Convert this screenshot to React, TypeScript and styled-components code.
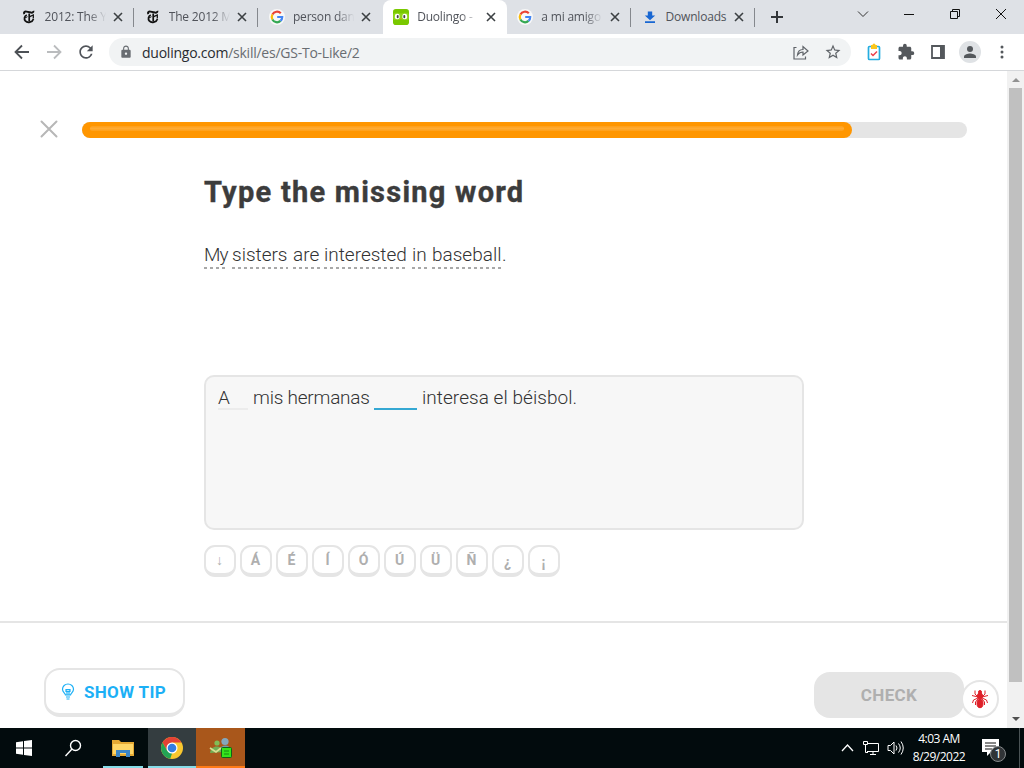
import styled, { createGlobalStyle } from 'styled-components';
import { MdExtension, MdLock, MdRefresh, MdStarBorder } from 'react-icons/md';

const GlobalStyle = createGlobalStyle`
  * {
    box-sizing: border-box;
  }
  body {
    margin: 0;
    overflow: hidden;
    background: #fff;
  }
  svg {
    display: block;
    flex: none;
  }
`;

const StyledScreen = styled.div`
  width: 1024px;
  height: 768px;
  display: flex;
  flex-direction: column;
  font-family: Roboto, 'Liberation Sans', sans-serif;
  color: #4b4b4b;
`;

/* browser tabs */
const StyledTabStrip = styled.div`
  height: 34px;
  flex: none;
  display: flex;
  align-items: stretch;
  padding-left: 10px;
  background: #dee1e6;
  font-family: 'Open Sans', 'Noto Sans', sans-serif;
`;
const StyledTab = styled.div<{ $active?: boolean; $line?: boolean }>`
  position: relative;
  width: 124.2px;
  flex: none;
  display: flex;
  align-items: center;
  padding-left: 10.6px;
  border-radius: 8px 8px 0 0;
  background: ${(props) => (props.$active ? '#fff' : 'transparent')};
  &::after {
    content: '';
    position: absolute;
    right: 0;
    top: 8px;
    width: 1px;
    height: 19px;
    background: ${(props) => (props.$line ? '#85888d' : 'transparent')};
  }
`;
const StyledTabTitle = styled.span<{ $full?: boolean }>`
  width: 62px;
  margin-left: 8px;
  white-space: nowrap;
  font-size: 12px;
  line-height: 18px;
  letter-spacing: -0.2px;
  color: #50535a;
  mask-image: ${(props) =>
    props.$full ? 'none' : 'linear-gradient(90deg, #000 70%, transparent 99%)'};
`;
const StyledTabClose = styled.span`
  width: 16px;
  margin-left: 3.4px;
  display: flex;
  justify-content: center;
`;
const StyledNewTab = styled.div`
  display: flex;
  align-items: center;
  margin-left: 15px;
`;
const StyledWindowButtons = styled.div`
  display: flex;
  align-items: flex-start;
  gap: 30px;
  margin-left: auto;
  padding: 6px 15px 0 0;
`;

/* address bar */
const StyledToolbar = styled.div`
  height: 37px;
  flex: none;
  display: flex;
  align-items: center;
  padding: 0 15px 0 13px;
  border-bottom: 1px solid #d5d7da;
  color: #50545a;
`;
const StyledNavButtons = styled.div`
  display: flex;
  align-items: center;
  gap: 14px;
  svg:last-child {
    margin-left: -1px;
  }
`;
const StyledAddress = styled.div`
  width: 744px;
  height: 28px;
  margin-left: 13px;
  padding: 0 9px 0 10px;
  display: flex;
  align-items: center;
  border-radius: 14px;
  background: #f1f3f4;
  font-family: 'Open Sans', 'Noto Sans', sans-serif;
  font-size: 14px;
  letter-spacing: -0.24px;
  color: #696d72;
  b {
    font-weight: 400;
    color: #292c30;
  }
`;
const StyledUrl = styled.span`
  flex: 1;
  margin-left: 9px;
`;
const StyledAddressIcons = styled.div`
  display: flex;
  align-items: center;
  gap: 14px;
  color: #5f6368;
`;
const StyledExtensions = styled.div`
  display: flex;
  align-items: center;
  gap: 14px;
  margin-left: 14px;
  color: #54585c;
`;
const StyledProfile = styled.div`
  display: flex;
  align-items: center;
  gap: 14px;
  margin-left: -2px;
`;

/* page */
const StyledViewport = styled.div`
  flex: 1;
  min-height: 0;
  display: flex;
`;
const StyledPage = styled.main`
  width: 1007px;
  display: flex;
  flex-direction: column;
`;
const StyledScrollbar = styled.div`
  width: 17px;
  display: flex;
  flex-direction: column;
  align-items: center;
  padding: 7px 0 7px;
  background: #f1f1f1;
`;
const StyledThumb = styled.div`
  width: 13px;
  height: 594px;
  margin: 6px 0 auto;
  background: #c0c0c0;
`;
const StyledProgressRow = styled.div`
  display: flex;
  align-items: center;
  gap: 24px;
  padding: 51px 40px 1px;
  svg {
    margin: -3px 0 -1px;
  }
`;
const StyledTrack = styled.div`
  flex: 1;
  height: 16px;
  border-radius: 8px;
  background: #e5e5e5;
`;
const StyledFill = styled.div`
  width: 87%;
  height: 16px;
  padding: 4px 8px;
  border-radius: 8px;
  background: #ff9600;
  &::before {
    content: '';
    display: block;
    height: 5px;
    border-radius: 3px;
    background: linear-gradient(#ff9f17, #ffab33 50%, #ff9f17);
  }
`;
const StyledChallenge = styled.section`
  width: 600px;
  height: 482px;
  margin-left: 204px;
  display: flex;
  flex-direction: column;
`;
const StyledHeading = styled.h1`
  margin: 35px 0 0;
  font-size: 29px;
  line-height: 36px;
  font-weight: 700;
  letter-spacing: 1.25px;
  white-space: nowrap;
  color: #3c3c3c;
  -webkit-text-stroke: 0.4px #3c3c3c;
`;
const StyledSentence = styled.div`
  height: 26px;
  margin-top: 33px;
  display: flex;
  font-size: 19px;
  line-height: 24px;
  font-weight: 300;
  color: #333;
`;
const StyledHint = styled.span<{ $width: number; $space: number; $spacing?: number }>`
  width: ${(props) => props.$width}px;
  margin-right: ${(props) => props.$space}px;
  white-space: nowrap;
  letter-spacing: ${(props) => props.$spacing || 0}px;
  background: repeating-linear-gradient(90deg, #a8a8a8 0 3px, transparent 3px 6px) 0 100% / 100% 2px
    no-repeat;
`;
const StyledAnswer = styled.div`
  height: 155px;
  margin-top: 106px;
  padding: 9px 12px;
  display: flex;
  align-items: flex-start;
  border: 2px solid #e5e5e5;
  border-radius: 10px;
  background: #f7f7f7;
  font-size: 19px;
  line-height: 24px;
  font-weight: 300;
  color: #333;
  white-space: nowrap;
`;
const StyledBlank = styled.span<{ $width: number; $color: string }>`
  width: ${(props) => props.$width}px;
  height: 24px;
  margin-right: 5px;
  border-bottom: 2px solid ${(props) => props.$color};
`;
const StyledPhrase = styled.span<{ $width: number; $spacing: number }>`
  width: ${(props) => props.$width}px;
  margin-right: 5px;
  letter-spacing: ${(props) => props.$spacing}px;
`;
const StyledKeys = styled.div`
  display: flex;
  gap: 4px;
  margin-top: 15px;
`;
const StyledKey = styled.button<{ $low?: boolean }>`
  width: 32px;
  height: 32px;
  padding: ${(props) => (props.$low ? '3px' : '0')} 1px 0 0;
  border: 2px solid #e5e5e5;
  border-bottom-width: 4px;
  border-radius: 11px;
  background: #fff;
  font-family: Roboto, sans-serif;
  font-size: 14px;
  line-height: 20px;
  font-weight: 700;
  color: #afafaf;
`;
const StyledFooter = styled.footer`
  flex: 1;
  display: flex;
  justify-content: space-between;
  align-items: flex-start;
  padding: 45px 43px 0 44px;
  border-top: 2px solid #e5e5e5;
`;
const StyledButton = styled.button`
  display: flex;
  align-items: center;
  justify-content: center;
  padding: 0;
  border-radius: 16px;
  font-family: Roboto, sans-serif;
  font-size: 17px;
  font-weight: 700;
  letter-spacing: 0.35px;
`;
const StyledTipButton = styled(StyledButton)`
  width: 141px;
  height: 49px;
  gap: 9px;
  padding-right: 2px;
  border: 2px solid #e5e5e5;
  border-bottom-width: 4px;
  background: #fff;
  color: #1cb0f6;
`;
const StyledCheckButton = styled(StyledButton)`
  position: relative;
  width: 150px;
  height: 46px;
  margin-top: 4px;
  border: 0;
  background: #e5e5e5;
  color: #afafaf;
`;
const StyledBugBadge = styled.span`
  position: absolute;
  left: 147px;
  top: 8px;
  width: 38px;
  height: 38px;
  display: flex;
  align-items: center;
  justify-content: center;
  border: 2px solid #e5e5e5;
  border-radius: 50%;
  background: #fff;
`;

/* taskbar */
const StyledTaskbar = styled.div`
  height: 40px;
  flex: none;
  display: flex;
  background: #020b0d;
  color: #fff;
`;
const StyledTask = styled.div<{ $width: number; $bg?: string; $line?: string; $inset?: number }>`
  width: ${(props) => props.$width}px;
  display: flex;
  align-items: center;
  justify-content: center;
  background: linear-gradient(${(props) => props.$line || 'transparent'} 0 0) center bottom /
      calc(100% - ${(props) => props.$inset || 0}px) 2px no-repeat
    ${(props) => props.$bg || 'transparent'};
`;
const StyledTray = styled.div`
  margin-left: auto;
  display: flex;
  align-items: center;
  padding-right: 18px;
  border-right: 1px solid #4a5355;
  margin-right: 4px;
`;
const StyledClock = styled.div`
  width: 60px;
  margin: 0 13px 0 5px;
  text-align: center;
  font-family: 'Open Sans', 'Noto Sans', sans-serif;
  font-size: 12px;
  line-height: 18px;
  letter-spacing: -0.5px;
  white-space: nowrap;
`;
const StyledNotice = styled.div`
  position: relative;
  width: 19px;
  margin-top: -1px;
`;
const StyledNoticeCount = styled.span`
  position: absolute;
  left: 8px;
  top: 7px;
  width: 16px;
  height: 16px;
  border: 1px solid #85898b;
  border-radius: 50%;
  background: #303437;
  font-size: 12px;
  line-height: 14px;
  text-align: center;
`;

function TimesIcon() {
  return (
    <svg width="16" height="16" viewBox="0 0 16 16" fill="none" stroke="#111">
      <path d="M3.3 5.2C2.4 3.2 3.8 2.2 5.5 2.6l4.5 1c1.6.3 2.7-.5 2.3-1.7" strokeWidth="2" />
      <path d="M5.8 6C3.2 7 2.8 10 4.3 11.900c2.200 2.500 7 1.600 8.200-2" strokeWidth="1.7" />
      <path d="M3.2 9.300l3.300-1.600" strokeWidth="1" />
      <path d="M8.2 4.500v8" strokeWidth="1.7" />
      <path d="M8.8 7.600l3.500-1.600v3.600" strokeWidth="1.3" />
    </svg>
  );
}

function GoogleIcon() {
  return (
    <svg width="16" height="16" viewBox="0 0 16 16">
      <circle cx="8" cy="8" r="8" fill="#f8f8f8" />
      <g fill="none" strokeWidth="2.2">
        <path d="M3.4 5.5A5.2 5.2 0 0 1 11.8 4.3" stroke="#ea4335" />
        <path d="M3.4 5.5a5.4 5.4 0 0 0 0 5" stroke="#fbbc05" />
        <path d="M3.4 10.5a5.2 5.2 0 0 0 8.1 1.4" stroke="#34a853" />
        <path d="M8.2 8h5a5.2 5.2 0 0 1-1.7 3.9" stroke="#4285f4" />
      </g>
    </svg>
  );
}

function DuoIcon() {
  return (
    <svg width="16" height="16" viewBox="0 0 17 17">
      <rect width="17" height="17" rx="3" fill="#79c800" />
      <path d="M0 5.5c2-2 6-1.500 8.500-.8 2.500-.7 6.500-1.200 8.500.8v5c-2 2-6 1.500-8.500 0-2.500 1.500-6.500 2-8.500 0z" fill="#8fd619" />
      <rect x="2" y="5" width="5" height="6" rx="2.3" fill="#fff" />
      <rect x="10" y="5" width="5" height="6" rx="2.3" fill="#fff" />
      <rect x="4" y="6.5" width="2" height="3.2" rx="1" fill="#444" />
      <rect x="11" y="6.5" width="2" height="3.2" rx="1" fill="#444" />
      <path d="M7.5 9.800h2l-1 1.400z" fill="#ff9d00" />
    </svg>
  );
}

function DownloadIcon() {
  return (
    <svg width="16" height="16" viewBox="0 0 16 16" fill="#1967d2">
      <path d="M5.8 2.500h4.400v4h3L8 11.300 2.800 6.500h3zM3 12.300h10V14H3z" />
    </svg>
  );
}

const tabs = [
  { title: '2012: The Y', icon: <TimesIcon />, line: true },
  { title: 'The 2012 M', icon: <TimesIcon />, line: true },
  { title: 'person dan', icon: <GoogleIcon /> },
  { title: 'Duolingo -', icon: <DuoIcon />, active: true },
  { title: 'a mi amigo', icon: <GoogleIcon />, line: true },
  { title: 'Downloads', icon: <DownloadIcon />, line: true, full: true },
];

const hints = [
  { word: 'My', width: 22, space: 6, spacing: -1 },
  { word: 'sisters', width: 56, space: 5 },
  { word: 'are', width: 27, space: 4 },
  { word: 'interested', width: 83, space: 5 },
  { word: 'in', width: 15, space: 5 },
  { word: 'baseball', width: 70, space: 0 },
];

const keys = ['↓', 'Á', 'É', 'Í', 'Ó', 'Ú', 'Ü', 'Ñ', '¿', '¡'];

function BrowserTabs() {
  return (
    <StyledTabStrip>
      {tabs.map((tab) => (
        <StyledTab key={tab.title} $active={tab.active} $line={tab.line}>
          {tab.icon}
          <StyledTabTitle $full={tab.full}>{tab.title}</StyledTabTitle>
          <StyledTabClose>
            <svg width="10" height="10" viewBox="0 0 10 10" stroke="#3c4043" strokeWidth="1.6">
              <path d="M1 1l8 8M9 1L1 9" />
            </svg>
          </StyledTabClose>
        </StyledTab>
      ))}
      <StyledNewTab>
        <svg width="14" height="14" viewBox="0 0 14 14" stroke="#33363a" strokeWidth="2">
          <path d="M7 1v12M1 7h12" />
        </svg>
      </StyledNewTab>
      <StyledWindowButtons>
        <svg width="16" height="16" viewBox="0 0 16 16" fill="none" stroke="#333">
          <path d="M3 5.500l5 5 5-5" />
        </svg>
        <svg width="16" height="16" viewBox="0 0 16 16" stroke="#111">
          <path d="M3 8.500h10" />
        </svg>
        <svg width="16" height="16" viewBox="0 0 16 16" fill="none" stroke="#111">
          <path d="M3.500 5.500h7v7h-7zM5.500 5.500v-2h7v7h-2" />
        </svg>
        <svg width="16" height="16" viewBox="0 0 16 16" stroke="#111">
          <path d="M3 3l10 10M13 3L3 13" />
        </svg>
      </StyledWindowButtons>
    </StyledTabStrip>
  );
}

function BrowserToolbar() {
  return (
    <StyledToolbar>
      <StyledNavButtons>
        <svg width="18" height="18" viewBox="0 0 18 18" fill="none" stroke="#4d5156" strokeWidth="1.8">
          <path d="M16 9H3M9 2.500L2.500 9 9 15.500" />
        </svg>
        <svg width="18" height="18" viewBox="0 0 18 18" fill="none" stroke="#babcbe" strokeWidth="1.8">
          <path d="M2 9h13M9 2.500L15.500 9 9 15.500" />
        </svg>
        <MdRefresh size={20} />
      </StyledNavButtons>
      <StyledAddress>
        <MdLock size={14} />
        <StyledUrl>
          <b>duolingo.com</b>/skill/es/GS-To-Like/2
        </StyledUrl>
        <StyledAddressIcons>
          <svg width="18" height="18" viewBox="0 0 18 18" fill="none" stroke="currentColor" strokeWidth="1.2">
            <path d="M4.500 4.500H2v11.500h11.500V13.500M5.500 12c.3-3.500 2.500-5.400 5.500-5.500V3.500l5 4.500-5 4v-3c-2.500 0-4 .8-5.500 3z" />
          </svg>
          <MdStarBorder size={18} />
        </StyledAddressIcons>
      </StyledAddress>
      <StyledExtensions>
        <svg width="18" height="18" viewBox="0 0 18 18" fill="none">
          <rect x="3.5" y="3.5" width="11" height="13" rx="1" fill="#fff" stroke="#25ade0" strokeWidth="1.7" />
          <path d="M6 2h1.500a1.500 1.500 0 0 1 3 0H12v4H6z" fill="#fbc61c" />
          <path d="M6 10.500l2 2 4-4" stroke="#ec3f4b" strokeWidth="1.5" />
        </svg>
        <MdExtension size={18} />
        <svg width="18" height="18" viewBox="0 0 18 18" fill="none">
          <path d="M3 3h12v12H3z" stroke="currentColor" strokeWidth="1.8" />
          <path d="M11 3h4v12h-4z" fill="currentColor" />
        </svg>
        <StyledProfile>
          <svg width="22" height="22" viewBox="0 0 22 22" fill="currentColor">
            <circle cx="11" cy="11" r="11" fill="#dfe2e5" />
            <circle cx="11" cy="8" r="3" />
            <path d="M5 17v-1.500c0-2 4-3 6-3s6 1 6 3V17z" />
          </svg>
          <svg width="14" height="16" viewBox="1 0 14 16" fill="currentColor">
            <circle cx="8" cy="3" r="1.5" />
            <circle cx="8" cy="8" r="1.5" />
            <circle cx="8" cy="13" r="1.5" />
          </svg>
        </StyledProfile>
      </StyledExtensions>
    </StyledToolbar>
  );
}

function Lesson() {
  return (
    <StyledPage>
      <StyledProgressRow>
        <svg width="18" height="18" viewBox="0 0 18 18" stroke="#b7b7b7" strokeWidth="2" strokeLinecap="round">
          <path d="M1.500 1.500l15 15M16.500 1.500l-15 15" />
        </svg>
        <StyledTrack>
          <StyledFill />
        </StyledTrack>
      </StyledProgressRow>
      <StyledChallenge>
        <StyledHeading>Type the missing word</StyledHeading>
        <StyledSentence>
          {hints.map((hint) => (
            <StyledHint key={hint.word} $width={hint.width} $space={hint.space} $spacing={hint.spacing}>
              {hint.word}
            </StyledHint>
          ))}
          .
        </StyledSentence>
        <StyledAnswer>
          <StyledBlank $width={30} $color="#ececec">A</StyledBlank>
          <StyledPhrase $width={116} $spacing={-0.22}>mis hermanas</StyledPhrase>
          <StyledBlank $width={43} $color="#35a8d3" />
          <StyledPhrase $width={156} $spacing={0.05}>interesa el béisbol.</StyledPhrase>
        </StyledAnswer>
        <StyledKeys>
          {keys.map((key) => (
            <StyledKey key={key} $low={key === '¿' || key === '¡'}>{key}</StyledKey>
          ))}
        </StyledKeys>
      </StyledChallenge>
      <StyledFooter>
        <StyledTipButton>
          <svg width="14" height="18" viewBox="0 0 14 18" fill="none" stroke="currentColor" strokeWidth="1.2">
            <path d="M4.500 12C4 10 1.500 9 1.500 6.200a5.500 5.200 0 0 1 11 0C12.500 9 10 10 9.500 12zM5 14h4M5.500 16h3M6 12V7.500M8 12V7.500M5 6.500h4v2H5z" />
          </svg>
          SHOW TIP
        </StyledTipButton>
        <StyledCheckButton>
          CHECK
          <StyledBugBadge>
            <svg width="18" height="20" viewBox="0 0 18 20" fill="#df2029" stroke="#df2029">
              <ellipse cx="9" cy="14.5" rx="3" ry="4.2" />
              <ellipse cx="9" cy="7" rx="2.6" ry="3" />
              <circle cx="9" cy="3" r="1.5" />
              <path d="M7 8L4 5V1.500M11 8l3-3V1.500M7 8L1 6.500M11 8l6-1.500M7 9l-4.500 2-1 3M11 9l4.500 2 1 3M7 10l-2.500 3v3M11 10l2.500 3v3" fill="none" />
            </svg>
          </StyledBugBadge>
        </StyledCheckButton>
      </StyledFooter>
    </StyledPage>
  );
}

function Taskbar() {
  return (
    <StyledTaskbar>
      <StyledTask $width={48}>
        <svg width="16" height="16" viewBox="0 0 16 16" fill="#fff">
          <path d="M0 2.300L7 1.200v6.300H0zM8 1l8-1v7.500H8zM0 8.500h7v6.300L0 13.700zM8 8.500h8V16l-8-1z" />
        </svg>
      </StyledTask>
      <StyledTask $width={49}>
        <svg width="18" height="18" viewBox="0 0 18 18" fill="none" stroke="#fff" strokeWidth="1.4">
          <circle cx="11.5" cy="6.5" r="5" />
          <path d="M8 10l-6.500 7" />
        </svg>
      </StyledTask>
      <StyledTask $width={51} $line="#86dce8" $inset={11}>
        <svg width="22" height="18" viewBox="0 0 22 18">
          <path d="M0 1h7l2 2h13v14H0z" fill="#e5a934" />
          <path d="M1 5h20v10H1z" fill="#ffd667" />
          <path d="M4 18v-7h14v7h-4v-4H8v4z" fill="#3d86c6" />
        </svg>
      </StyledTask>
      <StyledTask $width={48} $bg="#343d40" $line="#86dce8">
        <svg width="22" height="22" viewBox="0 0 22 22">
          <circle cx="11" cy="11" r="11" fill="#f9c72f" />
          <path d="M1.500 5.500A11 11 0 0 1 20.500 5.500H11L6.200 13.800z" fill="#e44235" />
          <path d="M1.500 5.500l4.700 8.200L11 16.500l-1.800 5.300A11 11 0 0 1 1.500 5.500z" fill="#23a455" />
          <circle cx="11" cy="11" r="5.5" fill="#fff" />
          <circle cx="11" cy="11" r="4.3" fill="#347de2" />
        </svg>
      </StyledTask>
      <StyledTask $width={49} $bg="#a9571b" $line="#ff7b18">
        <svg width="24" height="22" viewBox="0 0 24 22">
          <circle cx="8" cy="6" r="2.6" fill="#81bd56" />
          <circle cx="16" cy="4.5" r="3.6" fill="#84a7bd" />
          <path d="M1 16c1-8 11-9 13-1z" fill="#71af55" />
          <path d="M10 13c2-6 11-6 12 0z" fill="#6e9ead" />
          <path d="M1 11l6 4 5-4" fill="none" stroke="#d9df93" strokeWidth="1.7" />
          <rect x="12.5" y="10.5" width="10" height="10" rx="1" fill="#35e51b" stroke="#145f17" />
          <path d="M15 14h5M15 17h5" stroke="#168a14" />
        </svg>
      </StyledTask>
      <StyledTray>
        <svg width="13" height="10" viewBox="0 0 13 10" fill="none" stroke="#fff" strokeWidth="1.3">
          <path d="M1 8l5.500-6L12 8" />
        </svg>
        <StyledTask $width={33}>
          <svg width="18" height="16" viewBox="0 0 18 16" fill="none" stroke="#fff">
            <path d="M5 3.500h11.500v8H5M8 14.500h6M11 11.500v3M1.500 1.500h4v3h-4zM3.500 4.500v8H6" />
          </svg>
        </StyledTask>
        <svg width="17" height="16" viewBox="0 0 17 16" fill="none" stroke="#fff">
          <path d="M1 5.500h2.500L7 2v12l-3.500-3.500H1zM9 5.500q2 2.500 0 5M11.500 3.500q3.500 4.500 0 9M14 1.500q4.500 6.500 0 13" />
        </svg>
        <StyledClock>
          4:03 AM
          <br />
          8/29/2022
        </StyledClock>
        <StyledNotice>
          <svg width="17" height="17" viewBox="0 0 17 17">
            <path d="M0 0h17v13h-8l-4 4v-4H0z" fill="#fff" />
            <path d="M3 4h11M3 7h11M3 10h7" stroke="#111" />
          </svg>
          <StyledNoticeCount>1</StyledNoticeCount>
        </StyledNotice>
      </StyledTray>
    </StyledTaskbar>
  );
}

export default function App() {
  return (
    <StyledScreen>
      <GlobalStyle />
      <BrowserTabs />
      <BrowserToolbar />
      <StyledViewport>
        <Lesson />
        <StyledScrollbar>
          <svg width="8" height="4" viewBox="0 0 8 4" fill="#929292">
            <path d="M0 4l4-4 4 4z" />
          </svg>
          <StyledThumb />
          <svg width="8" height="4" viewBox="0 0 8 4" fill="#505050">
            <path d="M0 0h8L4 4z" />
          </svg>
        </StyledScrollbar>
      </StyledViewport>
      <Taskbar />
    </StyledScreen>
  );
}
